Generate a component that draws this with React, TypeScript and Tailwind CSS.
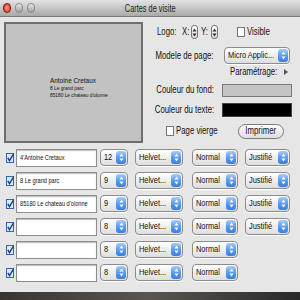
import React from "react"

const font = { fontFamily: '"Liberation Sans", Arial, sans-serif' }

// narrow text: the reference face is a condensed Helvetica
function T({ className = "", children }: { className?: string; children: React.ReactNode }) {
	return <span className={`inline-block whitespace-nowrap shrink-0 ${className}`}>{children}</span>
}

function Arrows({ light }: { light?: boolean }) {
	return (
		<svg width="5" height="9" viewBox="0 0 5 9">
			<polygon points="2.5,0.5 4.5,3.5 0.5,3.5" fill={light ? "#ffffff" : "#333"} />
			<polygon points="2.5,8.5 4.5,5.5 0.5,5.5" fill={light ? "#ffffff" : "#333"} />
		</svg>
	)
}

function Popup({ label, className }: { label: string; className: string }) {
	return (
		<div className={`h-[17px] rounded-[4px] border border-[#8c8c8c] bg-linear-to-b from-white to-[#dedede] flex items-center pl-[3px] pr-[1px] shadow-[0_1px_0_#fff] overflow-hidden ${className}`}>
			<div className="flex-1 min-w-0 flex items-center">
				<T className="text-[9.5px] leading-none text-[#111] origin-left scale-x-[0.78] -translate-y-px">{label}</T>
			</div>
			<div className="shrink-0 w-[10px] h-[13px] rounded-[3px] bg-linear-to-b from-[#a9cdf7] via-[#5b9cec] to-[#3a7ee0] flex items-center justify-center">
				<Arrows light />
			</div>
		</div>
	)
}

function Check({ checked }: { checked?: boolean }) {
	return (
		<svg width="8" height="10" viewBox="0 0 8 10" className="shrink-0">
			<rect x="0.5" y="0.5" width="7" height="9" fill={checked ? "#dbe8f8" : "#fff"} stroke={checked ? "#3c64a8" : "#777"} />
			{checked && <path d="M1.8 4.8 L3.5 7.6 L7.6 0.8" fill="none" stroke="#1d3f86" strokeWidth="1.4" />}
		</svg>
	)
}

function Stepper() {
	return (
		<div className="w-[7px] h-[14px] rounded-[3px] border border-[#777] bg-linear-to-b from-white to-[#d8d8d8] flex items-center justify-center">
			<Arrows />
		</div>
	)
}

function Label({ children }: { children: React.ReactNode }) {
	return (
		<div className="w-[60px] flex justify-end items-center">
			<T className="origin-right scale-x-[0.78]">{children}</T>
		</div>
	)
}

const rows = [
	{ text: "4'Antoine Cretaux", size: "12", align: true },
	{ text: "8 Le grand parc", size: "9", align: true },
	{ text: "85180 Le chateau d'olonne", size: "9", align: true },
	{ text: "", size: "8", align: true },
	{ text: "", size: "8", align: false },
	{ text: "", size: "8", align: false },
]

export default function App() {
	return (
		<div className="w-[300px] h-[300px] bg-[#e6e6e6] flex flex-col overflow-hidden text-[#111] leading-none" style={font}>
			{/* title bar */}
			<div className="h-[17px] shrink-0 bg-linear-to-b from-[#e4e4e4] to-[#a9a9a9] border-b border-[#7a7a7a] flex items-center relative">
				<div className="flex items-center gap-[4px] pl-[3px]">
					<span className="w-[8px] h-[10px] rounded-full bg-radial from-[#ff9a8a] to-[#c8120a] border border-[#8a1a10]" />
					<span className="w-[8px] h-[10px] rounded-full bg-linear-to-b from-[#e8e8e8] to-[#a0a0a0] border border-[#8a8a8a]" />
					<span className="w-[8px] h-[10px] rounded-full bg-linear-to-b from-[#e8e8e8] to-[#a0a0a0] border border-[#8a8a8a]" />
				</div>
				<div className="absolute left-0 right-0 flex justify-center pointer-events-none">
					<T className="text-[10.5px] leading-none text-[#222] scale-x-[0.7]">Cartes de visite</T>
				</div>
			</div>

			{/* top section */}
			<div className="flex pt-[5px]">
				<div className="ml-[4px] w-[139px] h-[121px] border-2 border-[#6e6e6e] bg-[#c2c2c2] flex flex-col items-start pl-[44px] pt-[52px]">
					<T className="text-[8px] leading-[9px] origin-left scale-x-[0.8]">Antoine Cretaux</T>
					<T className="text-[6px] leading-[7px] origin-left scale-x-[0.8]">8 Le grand parc</T>
					<T className="text-[6px] leading-[7px] origin-left scale-x-[0.8]">85180 Le chateau d'olonne</T>
				</div>

				<div className="flex flex-col ml-[11px] w-[146px] text-[10px] leading-none">
					<div className="flex items-center h-[16px] mt-[2px]">
						<div className="ml-[3px] w-[25px] flex items-center"><T className="origin-left scale-x-[0.78]">Logo:</T></div>
						<div className="w-[9px] flex items-center"><T className="origin-left scale-x-[0.78]">X:</T></div>
						<Stepper />
						<div className="ml-[3px] w-[10px] flex items-center"><T className="origin-left scale-x-[0.78]">Y:</T></div>
						<Stepper />
						<div className="ml-[19px] flex items-center gap-[2px]">
							<Check />
							<T className="origin-left scale-x-[0.78]">Visible</T>
						</div>
					</div>
					<div className="flex items-center h-[17px] mt-[7px]">
						<Label>Modele de page:</Label>
						<Popup label="Micro Applic..." className="ml-[10px] w-[66px]" />
					</div>
					<div className="flex items-center h-[12px] mt-[2px]">
						<div className="ml-[76px] w-[54px] flex items-center"><T className="origin-left scale-x-[0.78]">Paramétrage:</T></div>
						<svg width="4" height="6" viewBox="0 0 4 6"><polygon points="0,0 4,3 0,6" fill="#555" /></svg>
					</div>
					<div className="flex items-center h-[14px] mt-[5px]">
						<Label>Couleur du fond:</Label>
						<div className="ml-[8px] w-[70px] h-[13px] border border-[#7a7a7a] bg-[#c4c4c4]" />
					</div>
					<div className="flex items-center h-[14px] mt-[6px]">
						<Label>Couleur du texte:</Label>
						<div className="ml-[8px] w-[70px] h-[14px] border border-[#444] bg-black" />
					</div>
					<div className="flex items-center h-[16px] mt-[6px]">
						<div className="ml-[12px] w-[72px] flex items-center gap-[2px]">
							<Check />
							<T className="origin-left scale-x-[0.78]">Page vierge</T>
						</div>
						<button className="w-[46px] h-[15px] rounded-full border border-[#7a7a7a] bg-linear-to-b from-white to-[#dcdcdc] flex items-center justify-center overflow-hidden">
							<T className="text-[10px] leading-none scale-x-[0.78]">Imprimer</T>
						</button>
					</div>
				</div>
			</div>

			{/* field rows */}
			<div className="flex flex-col gap-[6px] mt-[6px] pl-[6px]">
				{rows.map((r, i) => (
					<div key={i} className="flex items-center h-[17px]">
						<Check checked />
						<div className="ml-[2px] w-[81px] h-[18px] border border-[#8e8e8e] bg-white shadow-[inset_0_1px_1px_#bbb] flex items-center px-[3px] overflow-hidden">
							<T className="text-[7.5px] leading-none origin-left scale-x-[0.75]">{r.text}</T>
						</div>
						<Popup label={r.size} className="ml-[3px] w-[28px]" />
						<Popup label="Helvet..." className="ml-[7px] w-[48px]" />
						<Popup label="Normal" className="ml-[9px] w-[46px]" />
						{r.align && <Popup label="Justifié" className="ml-[7px] w-[45px]" />}
					</div>
				))}
			</div>

			<div className="mt-auto h-[8px] bg-linear-to-r from-[#3a3530] via-[#5a5550] to-[#2a2a2a]" />
		</div>
	)
}
